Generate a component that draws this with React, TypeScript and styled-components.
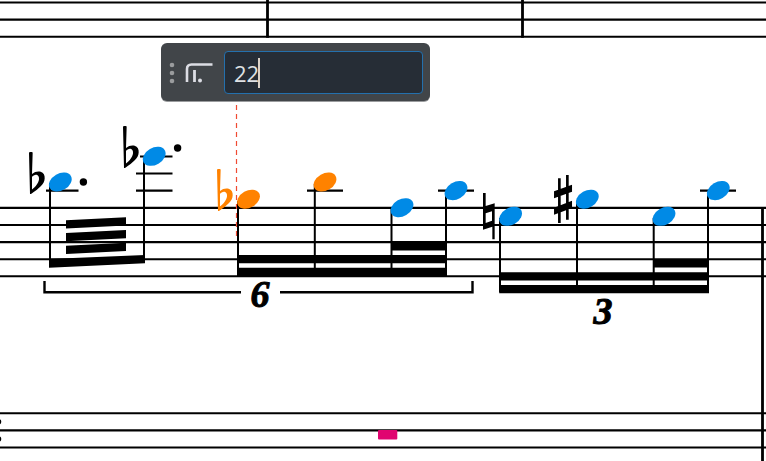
import React, { useState } from "react";
import styled, { createGlobalStyle } from "styled-components";

const BLUE = "#008ae6";
const ORANGE = "#ff8200";

const GlobalStyle = createGlobalStyle`
  *, *::before, *::after { box-sizing: border-box; }
  html, body { margin: 0; background: #fff; overflow: hidden; }
`;

const Canvas = styled.main`
  position: relative;
  min-height: 100vh;
  overflow: hidden;
  background: #fff;
  font-family: "Open Sans", "Noto Sans", sans-serif;
`;

const Notation = styled.svg`
  display: block;
  width: 100%;
  height: 100vh;
`;

const TupletNumber = styled.text`
  font: italic bold 38px "Liberation Serif", serif;
  text-anchor: middle;
  stroke: #000;
  stroke-width: 1px;
`;

const Popover = styled.form`
  position: absolute;
  top: 43px;
  left: 161px;
  display: flex;
  align-items: center;
  padding: 8px 7px 7px;
  border-radius: 6px;
  background: #414549;
  box-shadow: 0 1px 0 #9a9c9e;
`;

const Grip = styled.svg`
  width: 8px;
  height: 24px;
  margin-right: 8px;
  fill: #9a9c9e;
`;

const TupletIcon = styled.svg`
  width: 30px;
  height: 24px;
  margin-right: 10px;
  fill: none;
  stroke: #dcdde4;
`;

const Field = styled.label`
  position: relative;
  display: block;
`;

const FieldInput = styled.input`
  display: block;
  width: 199px;
  height: 43px;
  padding: 0 9px;
  border: 1px solid #2470ad;
  border-radius: 4px;
  outline: none;
  background: #262d36;
  color: #dfe1e4;
  caret-color: transparent;
  font: 22px "Open Sans", "Noto Sans", sans-serif;
`;

const Caret = styled.span`
  position: absolute;
  top: 7px;
  left: 34px;
  width: 2px;
  height: 30px;
  background: #ddd3c8;
`;

type Point = { x: number; y: number };

const Staff = ({ lines }: { lines: number[] }) => (
  <g stroke="#000" strokeWidth="2.1">
    {lines.map((y) => (
      <line key={y} x1="0" x2="100%" y1={y} y2={y} />
    ))}
  </g>
);

const Head = ({ x, y, color = BLUE }: Point & { color?: string }) => (
  <ellipse rx="12.2" ry="8.5" fill={color} transform={`translate(${x} ${y}) rotate(-30)`} />
);

const Flat = ({ x, y, color = "#000" }: Point & { color?: string }) => (
  <path
    transform={`translate(${x} ${y}) scale(.3333)`}
    fill={color}
    fillRule="evenodd"
    d="M0 1 Q0-1 4-1 H8 Q11-1 11 1 L9 65 C17 57 28 56 35 58 C44 61 48 69 47 78 C46 96 30 107 7 124 Q4 126 3 124 Z M9 74 C14 67 23 64 28 71 C34 81 27 98 9 111 Z"
  />
);

const Natural = ({ x, y }: Point) => (
  <path
    transform={`translate(${x} ${y}) scale(.3333)`}
    fillRule="evenodd"
    d="M0 0 H8 V39 L35 31 V139 H28 V101 L0 110 Z M8 61 V90 L27 83 V55 Z"
  />
);

const Sharp = ({ x, y }: Point) => (
  <g transform={`translate(${x} ${y}) scale(.3333)`}>
    <path d="M10 10h8v134h-8z M34 0h8v134h-8z M-2 49L52 29V50L-2 70Z M-2 98L52 77V99L-2 119Z" />
  </g>
);

const stems = [
  [50, 183, 263],
  [144, 157, 259],
  [238, 201, 273],
  [314.8, 184, 273],
  [391.5, 209, 273],
  [446, 192, 273],
  [500, 218, 292],
  [577, 201, 292],
  [653.7, 218, 292],
  [708, 192, 292],
];

const ledgers = [
  [46, 78.5, 190.6],
  [140, 172.5, 156.5],
  [136, 172.5, 173.5],
  [136, 172.5, 190.6],
  [307, 343, 190.6],
  [438, 474, 190.6],
  [700, 736, 190.6],
];

const notes = [
  { x: 60.3, y: 182 },
  { x: 154.2, y: 156.3 },
  { x: 248.5, y: 199.2, color: ORANGE },
  { x: 325, y: 182, color: ORANGE },
  { x: 402, y: 207.7 },
  { x: 456, y: 190.6 },
  { x: 510.6, y: 216.3 },
  { x: 587.3, y: 199.2 },
  { x: 664, y: 216.3 },
  { x: 718.3, y: 190.6 },
];

export default function App() {
  const [tuplet, setTuplet] = useState("22");

  return (
    <Canvas>
      <GlobalStyle />
      <Notation role="img" aria-label="Music score">
        <Staff lines={[2.5, 19.6, 36.7]} />
        <Staff lines={[207.9, 225, 242.1, 259.2, 276.3]} />
        <Staff lines={[413.3, 430.4, 447.5]} />

        <g stroke="#000" strokeWidth="2.8">
          <path d="M267.5 0V37.7M522.5 0V37.7M762.5 207V2000" />
        </g>

        <g stroke="#000" strokeWidth="2.2">
          {ledgers.map(([x1, x2, y], i) => (
            <line key={i} x1={x1} x2={x2} y1={y} y2={y} />
          ))}
        </g>

        <path
          d="M236.5 105V236"
          stroke="#f04a32"
          strokeWidth="1.2"
          strokeDasharray="5 4"
        />

        <g stroke="#000" strokeWidth="2">
          {stems.map(([x, y1, y2]) => (
            <line key={x} x1={x} x2={x} y1={y1} y2={y2} />
          ))}
        </g>

        <path d="M49 259L145 255V263.3L49 267.7Z" />
        <path d="M66 220.2L126 217.2V225.5L66 228.5Z M66 233L126 230V238.3L66 241.3Z M66 245.8L126 242.8V251.1L66 254.1Z" />
        <path d="M237 255H447V263.3H237Z M237 267.8H447V276.3H237Z M391 241.8H447V250.4H391Z" />
        <path d="M499.2 272.2H709V280.5H499.2Z M499.2 285H709V293.3H499.2Z M653 258.9H709V267.5H653Z" />

        {notes.map((note) => (
          <Head key={note.x} {...note} />
        ))}

        <Flat x={29} y={152.4} />
        <Flat x={123} y={126.4} />
        <Flat x={217} y={169.4} color={ORANGE} />
        <Natural x={483} y={193} />
        <Sharp x={554.7} y={175} />
        <circle cx="83.4" cy="182" r="3.7" />
        <circle cx="177.6" cy="148" r="3.7" />

        <path
          d="M44.5 281V292.3H241M280 292.3H472.5V281"
          fill="none"
          stroke="#000"
          strokeWidth="2.4"
        />
        <TupletNumber x="260" y="307">6</TupletNumber>
        <TupletNumber x="603" y="324">3</TupletNumber>

        <circle cx="-1.5" cy="421.8" r="2.8" />
        <circle cx="-1.5" cy="438.9" r="2.8" />
        <rect x="378" y="430" width="19.3" height="9.5" rx="1" fill="#e00570" />
      </Notation>

      <Popover onSubmit={(event) => event.preventDefault()}>
        <Grip viewBox="0 0 8 24" aria-hidden="true">
          <circle cx="4" cy="4" r="2.3" />
          <circle cx="4" cy="12" r="2.3" />
          <circle cx="4" cy="20" r="2.3" />
        </Grip>
        <TupletIcon viewBox="0 0 30 24" aria-hidden="true">
          <path d="M3 21V8Q3 3.5 7.5 3.5H28.5" strokeWidth="2.6" />
          <path d="M10.5 9V21" strokeWidth="2.8" />
          <circle cx="16" cy="19.5" r="2" fill="#dcdde4" stroke="none" />
        </TupletIcon>
        <Field>
          <FieldInput
            type="text"
            aria-label="Tuplet"
            value={tuplet}
            onChange={(event) => setTuplet(event.target.value)}
          />
          <Caret />
        </Field>
      </Popover>
    </Canvas>
  );
}
